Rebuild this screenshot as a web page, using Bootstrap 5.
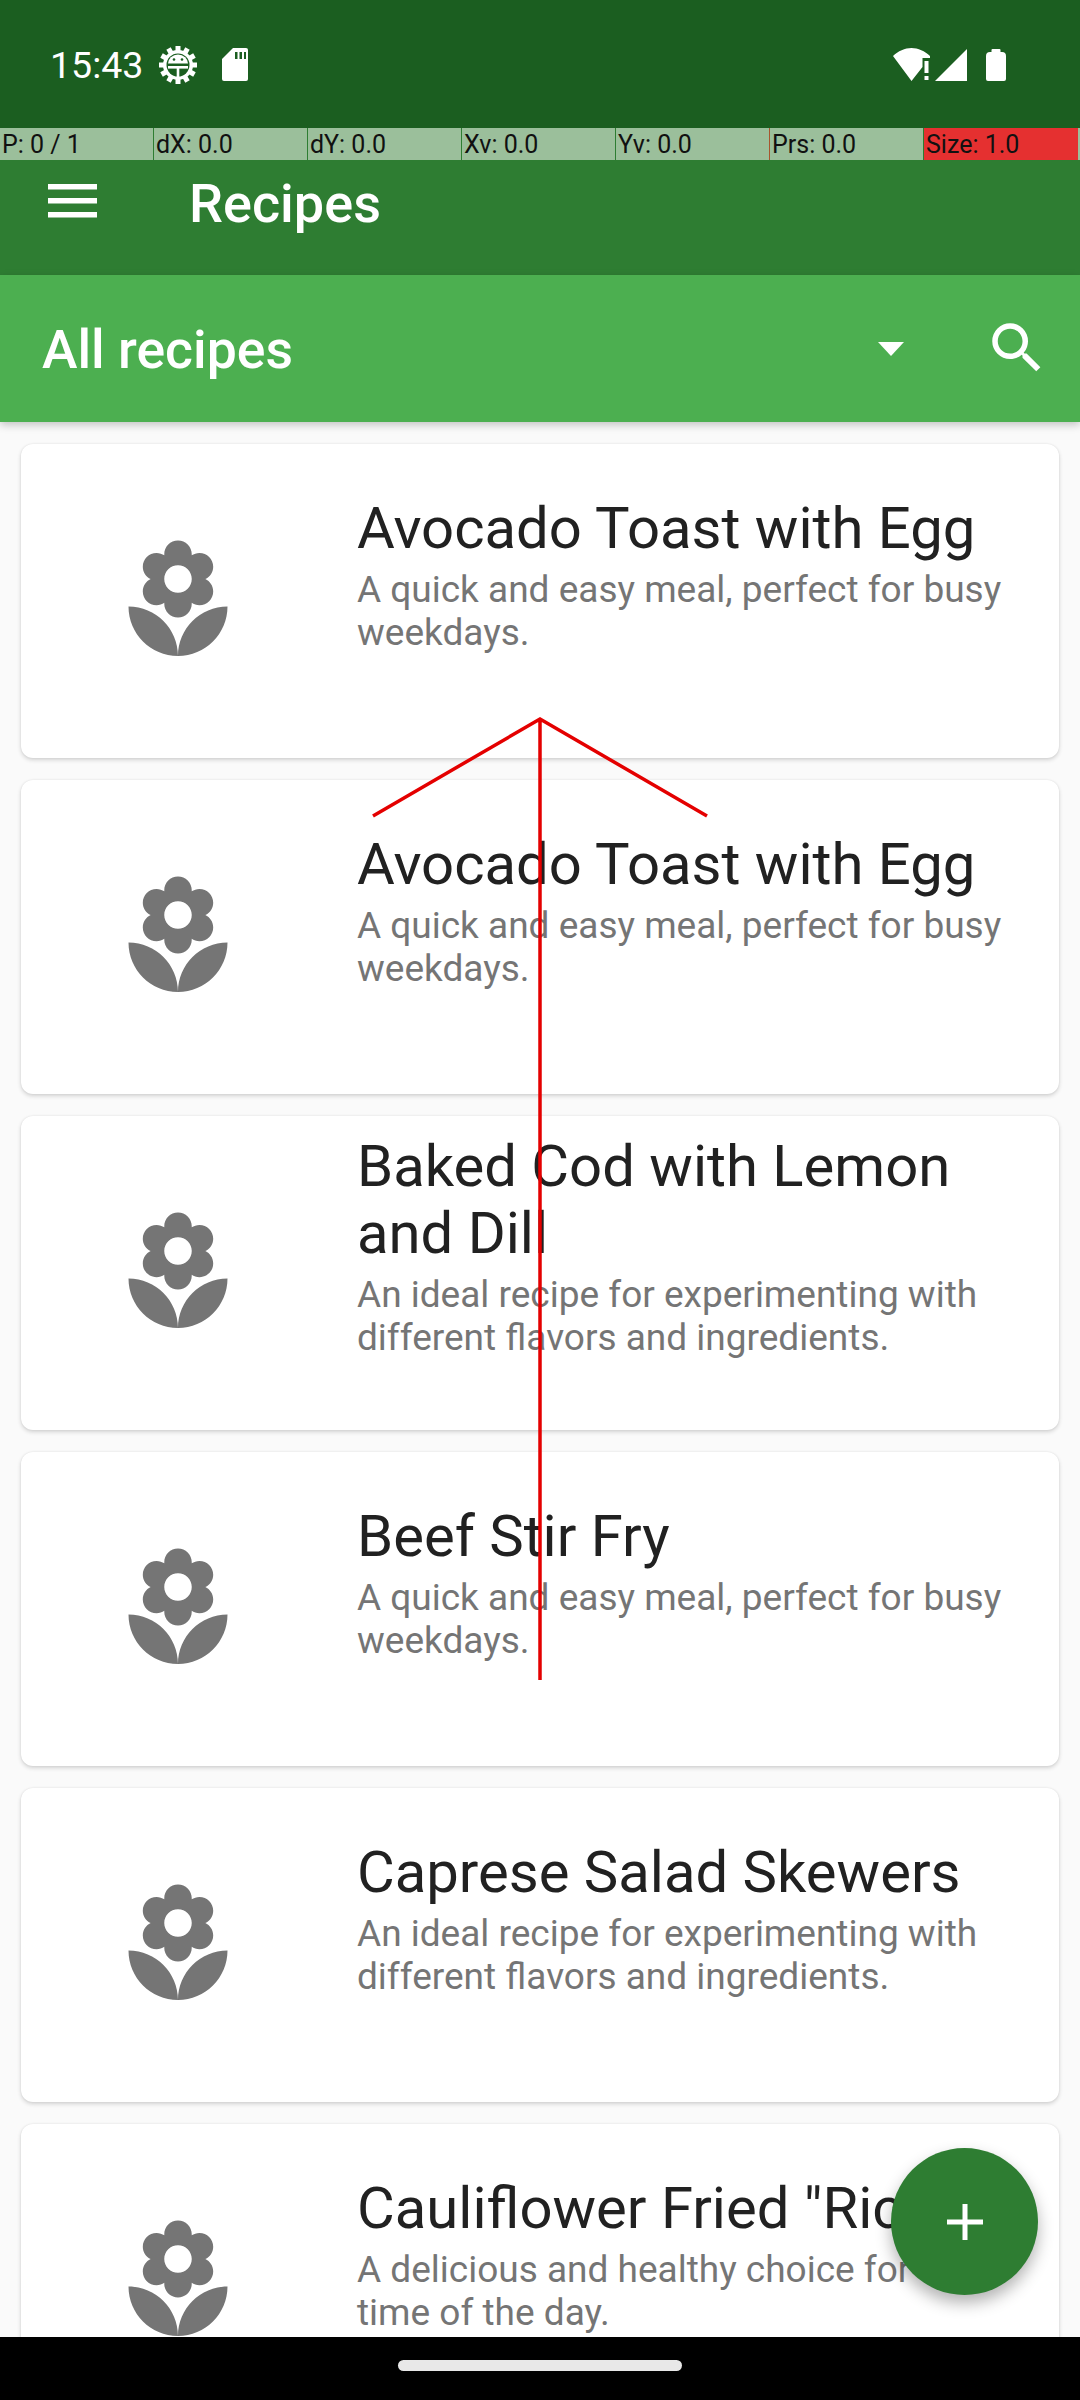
<!DOCTYPE html>
<html lang="en">
<head>
<meta charset="utf-8">
<title>Recipes</title>
<link href="https://cdn.jsdelivr.net/npm/bootstrap@5.3.0/dist/css/bootstrap.min.css" rel="stylesheet">
<style>
html,body{margin:0;width:1080px;height:2400px;overflow:hidden;background:#fafafa;font-family:Roboto,"Liberation Sans",sans-serif}
.phone{width:1080px;height:2400px;overflow:hidden}
.status-strip{height:128px;background:#1b5e20;color:#fff;padding:1px 74px 0 50px;flex:none}
.status-clock{font-size:37.5px;line-height:1;margin-right:16px;padding-top:3px}
.status-gap{margin-left:25px}
.ptr-strip{height:32px;background:#9bbf9b;flex:none}
.ptr-cell{width:154px;height:32px;flex:none;font-size:25px;line-height:34px;color:#111;padding-left:2px;border-right:1px solid #2e7d32;white-space:nowrap;overflow:hidden}
.ptr-mark{border-right-color:#a8552d}
.ptr-alert{background:#e53030;border-right-color:#e53030}
.app-strip{height:115px;background:#2e7d32;color:#fff;flex:none;padding:0 0 34px 48px}
.app-title{font-size:54px;font-weight:500;line-height:64px;margin-left:92px;margin-top:6px}
.filter-strip{height:147px;background:#4caf50;color:#fff;flex:none;box-shadow:0 3px 8px rgba(0,0,0,.22);position:relative;z-index:2;padding-left:42px}
.filter-label{font-size:53.5px;font-weight:500;line-height:64px;margin-top:2px}
.filter-arrow{margin-left:auto;margin-right:80px}
.filter-search{margin-right:30px;margin-top:-2px}
.recipe-area{padding:22px 21px 0;overflow:hidden;min-height:0}
.recipe-card{height:314px;flex:none;margin-bottom:22px;background:#fff;border:0;border-radius:12px;box-shadow:0 2px 4px rgba(0,0,0,.16),0 0 2px rgba(0,0,0,.08)}
.recipe-thumb{width:132px;height:132px;margin-left:91px;flex:none}
.recipe-copy{margin-left:113px;padding:0 40px 54px 0;min-width:0}
.recipe-name{font-size:58px;line-height:67px;color:#212121;margin:0 0 6px;font-weight:400}
.recipe-desc{font-size:37px;line-height:43px;color:#757575;margin:0}
.nav-strip{height:63px;background:#000;flex:none;position:relative;z-index:3}
.nav-pill{width:284px;height:11px;border-radius:6px;background:#e8e8e8;margin-top:-6px}
.fab-add{position:absolute;left:891px;top:2148px;width:147px;height:147px;border-radius:50%;background:#2e7d32;box-shadow:0 8px 16px rgba(0,0,0,.3);z-index:4}
.gesture-layer{position:absolute;left:0;top:0;z-index:5;pointer-events:none}
</style>
</head>
<body>
<div class="phone d-flex flex-column position-relative">
  <div class="status-strip d-flex align-items-center">
    <span class="status-clock">15:43</span>
    <svg width="38" height="38" viewBox="0 0 38 38" aria-hidden="true"><g fill="#fff"><circle cx="19" cy="19" r="15"/><g id="t"><rect x="16.5" y="0" width="5" height="6"/><rect x="16.5" y="32" width="5" height="6"/><rect x="0" y="16.5" width="6" height="5"/><rect x="32" y="16.5" width="6" height="5"/></g><use href="#t" transform="rotate(30 19 19)"/><use href="#t" transform="rotate(60 19 19)"/></g><circle cx="19" cy="19" r="11.5" fill="#1b5e20"/><path d="M9 17.5a10 9 0 0 1 20 0z" fill="#fff"/><rect x="9" y="20" width="20" height="2.6" fill="#fff"/><rect x="17.7" y="20" width="2.6" height="11" fill="#fff"/><circle cx="15" cy="13.5" r="1.3" fill="#1b5e20"/><circle cx="23" cy="13.5" r="1.3" fill="#1b5e20"/></svg>
    <svg class="status-gap" width="26" height="33" viewBox="0 0 26 33" aria-hidden="true"><path fill="#fff" d="M11 0h13a2 2 0 0 1 2 2v29a2 2 0 0 1-2 2H2a2 2 0 0 1-2-2V11z"/><path fill="#1b5e20" d="M13 4h2.500v7H13zM17.500 4H20v7h-2.500zM22 4h2v7h-2z"/></svg>
    <svg class="ms-auto" width="113" height="34" viewBox="0 0 113 34" aria-hidden="true"><path fill="#fff" d="M0 8C5 3 12 0 18.500 0S32 3 37 8v2h-7.500v9L18.500 33z"/><path fill="#fff" d="M31.500 13h4v12h-4zM31.500 28h4v4h-4z"/><path fill="#fff" d="M42 33 74 1v32z"/><path fill="#fff" d="M98.500 2a1 1 0 0 1 1-1h7a1 1 0 0 1 1 1v2h1.500a4 4 0 0 1 4 4v23a2 2 0 0 1-2 2H95a2 2 0 0 1-2-2V8a4 4 0 0 1 4-4h1.500z"/></svg>
  </div>
  <div class="ptr-strip d-flex">
    <div class="ptr-cell">P: 0 / 1</div>
    <div class="ptr-cell">dX: 0.0</div>
    <div class="ptr-cell">dY: 0.0</div>
    <div class="ptr-cell">Xv: 0.0</div>
    <div class="ptr-cell ptr-mark">Yv: 0.0</div>
    <div class="ptr-cell">Prs: 0.0</div>
    <div class="ptr-cell ptr-alert">Size: 1.0</div>
  </div>
  <div class="app-strip d-flex align-items-center">
    <svg width="49" height="34" viewBox="0 0 49 34" aria-hidden="true"><path fill="#fff" d="M0 0h49v5.500H0zM0 14h49v5.500H0zM0 28h49v5.500H0z"/></svg>
    <div class="app-title">Recipes</div>
  </div>
  <div class="filter-strip d-flex align-items-center">
    <div class="filter-label">All recipes</div>
    <svg class="filter-arrow" width="26" height="14" viewBox="0 0 26 14" aria-hidden="true"><path fill="#fff" d="M0 0h26L13 14z"/></svg>
    <svg class="filter-search" width="66" height="66" viewBox="0 0 24 24" aria-hidden="true"><path fill="#fff" d="M15.500 14h-.79l-.28-.27A6.470 6.470 0 0 0 16 9.500 6.500 6.500 0 1 0 9.500 16c1.610 0 3.090-.59 4.230-1.570l.27.28v.79l5 4.990L20.490 19l-4.990-5zm-6 0C7.010 14 5 11.990 5 9.500S7.010 5 9.500 5 14 7.010 14 9.500 11.990 14 9.500 14z"/></svg>
  </div>
  <main class="recipe-area flex-grow-1 d-flex flex-column">
    <div class="card recipe-card flex-row align-items-center">
      <svg class="recipe-thumb" viewBox="0 0 24 24" aria-hidden="true"><path id="flower" fill="#757575" d="M12 22c4.970 0 9-4.030 9-9-4.970 0-9 4.030-9 9zM5.600 10.250c0 1.380 1.120 2.500 2.500 2.500.53 0 1.010-.16 1.420-.44l-.02.19c0 1.380 1.120 2.500 2.500 2.500s2.500-1.120 2.500-2.500l-.02-.19c.4.28.89.44 1.420.44 1.380 0 2.500-1.120 2.500-2.500 0-1-.59-1.850-1.430-2.250.84-.4 1.430-1.250 1.430-2.250 0-1.380-1.120-2.500-2.500-2.500-.53 0-1.010.16-1.420.44l.02-.19C14.500 2.120 13.380 1 12 1S9.500 2.120 9.500 3.500l.02.19c-.4-.28-.89-.44-1.420-.44-1.380 0-2.500 1.120-2.500 2.500 0 1 .59 1.850 1.430 2.250-.84.4-1.430 1.250-1.430 2.250zM12 5.500c1.380 0 2.500 1.120 2.500 2.500s-1.120 2.500-2.500 2.500S9.500 9.380 9.500 8s1.120-2.500 2.500-2.500zM3 13c0 4.970 4.030 9 9 9 0-4.970-4.030-9-9-9z"/></svg>
      <div class="recipe-copy flex-grow-1"><h2 class="recipe-name">Avocado Toast with Egg</h2><p class="recipe-desc">A quick and easy meal, perfect for busy weekdays.</p></div>
    </div>
    <div class="card recipe-card flex-row align-items-center">
      <svg class="recipe-thumb" viewBox="0 0 24 24" aria-hidden="true"><use href="#flower"/></svg>
      <div class="recipe-copy flex-grow-1"><h2 class="recipe-name">Avocado Toast with Egg</h2><p class="recipe-desc">A quick and easy meal, perfect for busy weekdays.</p></div>
    </div>
    <div class="card recipe-card flex-row align-items-center">
      <svg class="recipe-thumb" viewBox="0 0 24 24" aria-hidden="true"><use href="#flower"/></svg>
      <div class="recipe-copy flex-grow-1"><h2 class="recipe-name">Baked Cod with Lemon and Dill</h2><p class="recipe-desc">An ideal recipe for experimenting with different flavors and ingredients.</p></div>
    </div>
    <div class="card recipe-card flex-row align-items-center">
      <svg class="recipe-thumb" viewBox="0 0 24 24" aria-hidden="true"><use href="#flower"/></svg>
      <div class="recipe-copy flex-grow-1"><h2 class="recipe-name">Beef Stir Fry</h2><p class="recipe-desc">A quick and easy meal, perfect for busy weekdays.</p></div>
    </div>
    <div class="card recipe-card flex-row align-items-center">
      <svg class="recipe-thumb" viewBox="0 0 24 24" aria-hidden="true"><use href="#flower"/></svg>
      <div class="recipe-copy flex-grow-1"><h2 class="recipe-name">Caprese Salad Skewers</h2><p class="recipe-desc">An ideal recipe for experimenting with different flavors and ingredients.</p></div>
    </div>
    <div class="card recipe-card flex-row align-items-center">
      <svg class="recipe-thumb" viewBox="0 0 24 24" aria-hidden="true"><use href="#flower"/></svg>
      <div class="recipe-copy flex-grow-1"><h2 class="recipe-name">Cauliflower Fried "Rice"</h2><p class="recipe-desc">A delicious and healthy choice for any time of the day.</p></div>
    </div>
  </main>
  <div class="nav-strip d-flex align-items-center justify-content-center"><div class="nav-pill"></div></div>
  <button type="button" class="btn fab-add d-flex align-items-center justify-content-center p-0" aria-label="Add recipe">
    <svg width="36" height="36" viewBox="0 0 36 36" aria-hidden="true"><path fill="#fff" d="M15.500 0h5v15.500H36v5H20.500V36h-5V20.500H0v-5h15.500z"/></svg>
  </button>
  <svg class="gesture-layer" width="1080" height="2400" viewBox="0 0 1080 2400" aria-hidden="true"><path fill="none" stroke="#e40000" stroke-width="3.5" d="M373 816 540 719 707 816M540 719V1680"/></svg>
</div>
<script src="https://cdn.jsdelivr.net/npm/bootstrap@5.3.0/dist/js/bootstrap.bundle.min.js"></script>
</body>
</html>
